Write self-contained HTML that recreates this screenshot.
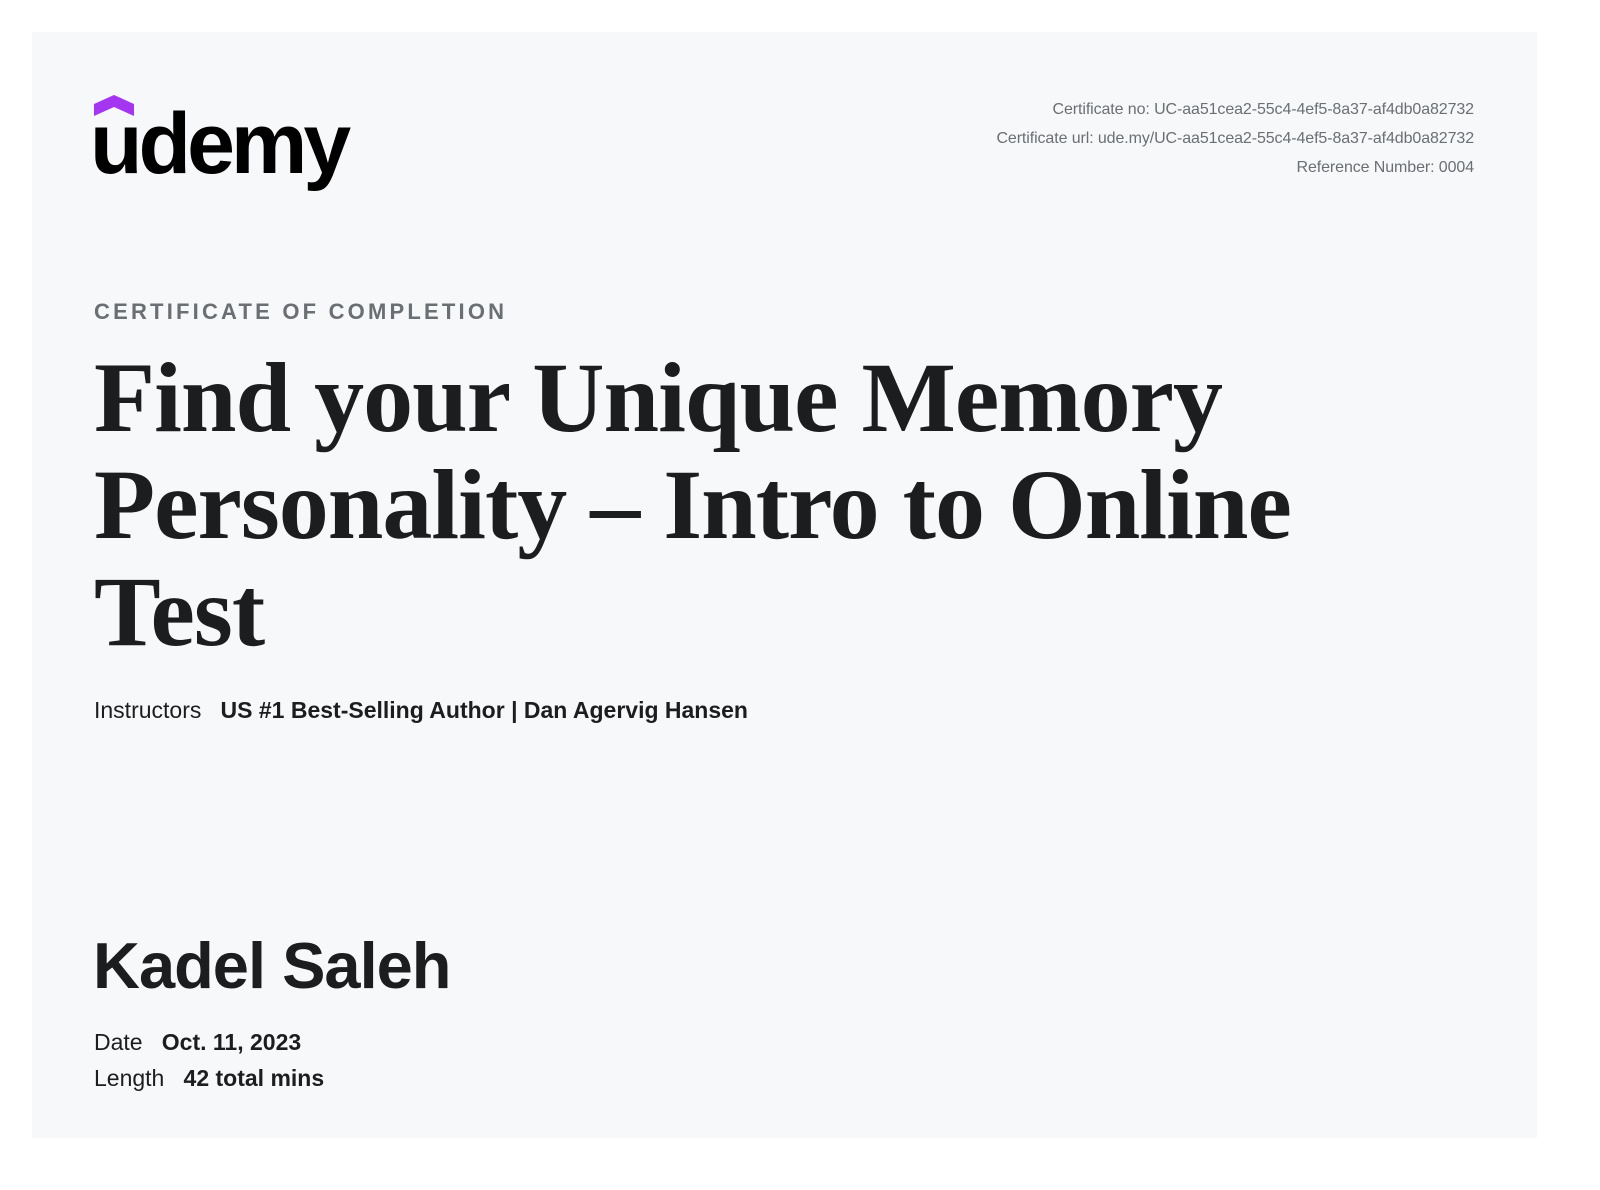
<!DOCTYPE html>
<html><head><style>
body{margin:0;width:1600px;height:1190px;background:#fff;position:relative;font-family:"Liberation Sans",sans-serif;color:#1c1d1f}
.card{position:absolute;left:32px;top:32px;width:1505px;height:1106px;background:#f7f8fa}
.a{position:absolute;white-space:nowrap}
.meta{right:126px;text-align:right;font-size:16px;color:#6a6f73;line-height:29px;top:95px;letter-spacing:-0.1px}
.title{left:94px;top:344px;font-family:"Liberation Serif",serif;font-weight:bold;font-size:100px;line-height:107px;letter-spacing:-1px;color:#1c1d1f}
</style></head><body>
<div class="card"></div>
<svg class="a" style="left:94px;top:95px" width="40" height="21" viewBox="0 0 40 21"><path d="M0 9 L20 0 L40 9 V21 L20 12 L0 21Z" fill="#a435f0"/></svg>
<div class="a" style="left:90px;top:94px;font-size:86px;font-weight:bold;letter-spacing:-4px;line-height:100px;color:#000">udemy</div>
<div class="a meta">Certificate no: UC-aa51cea2-55c4-4ef5-8a37-af4db0a82732<br>Certificate url: ude.my/UC-aa51cea2-55c4-4ef5-8a37-af4db0a82732<br>Reference Number: 0004</div>
<div class="a" style="left:94px;top:299px;font-size:22px;font-weight:bold;letter-spacing:3.2px;color:#6a6f73">CERTIFICATE OF COMPLETION</div>
<div class="a title">Find your Unique Memory<br>Personality – Intro to Online<br>Test</div>
<div class="a" style="left:94px;top:697px;font-size:23px;letter-spacing:0">Instructors&nbsp;&nbsp; <b>US #1 Best-Selling Author | Dan Agervig Hansen</b></div>
<div class="a" style="left:93px;top:928px;font-size:65px;font-weight:bold;letter-spacing:-1px">Kadel Saleh</div>
<div class="a" style="left:94px;top:1024px;font-size:23px;line-height:36px;letter-spacing:0">Date&nbsp;&nbsp; <b>Oct. 11, 2023</b><br>Length&nbsp;&nbsp; <b>42 total mins</b></div>
</body></html>
